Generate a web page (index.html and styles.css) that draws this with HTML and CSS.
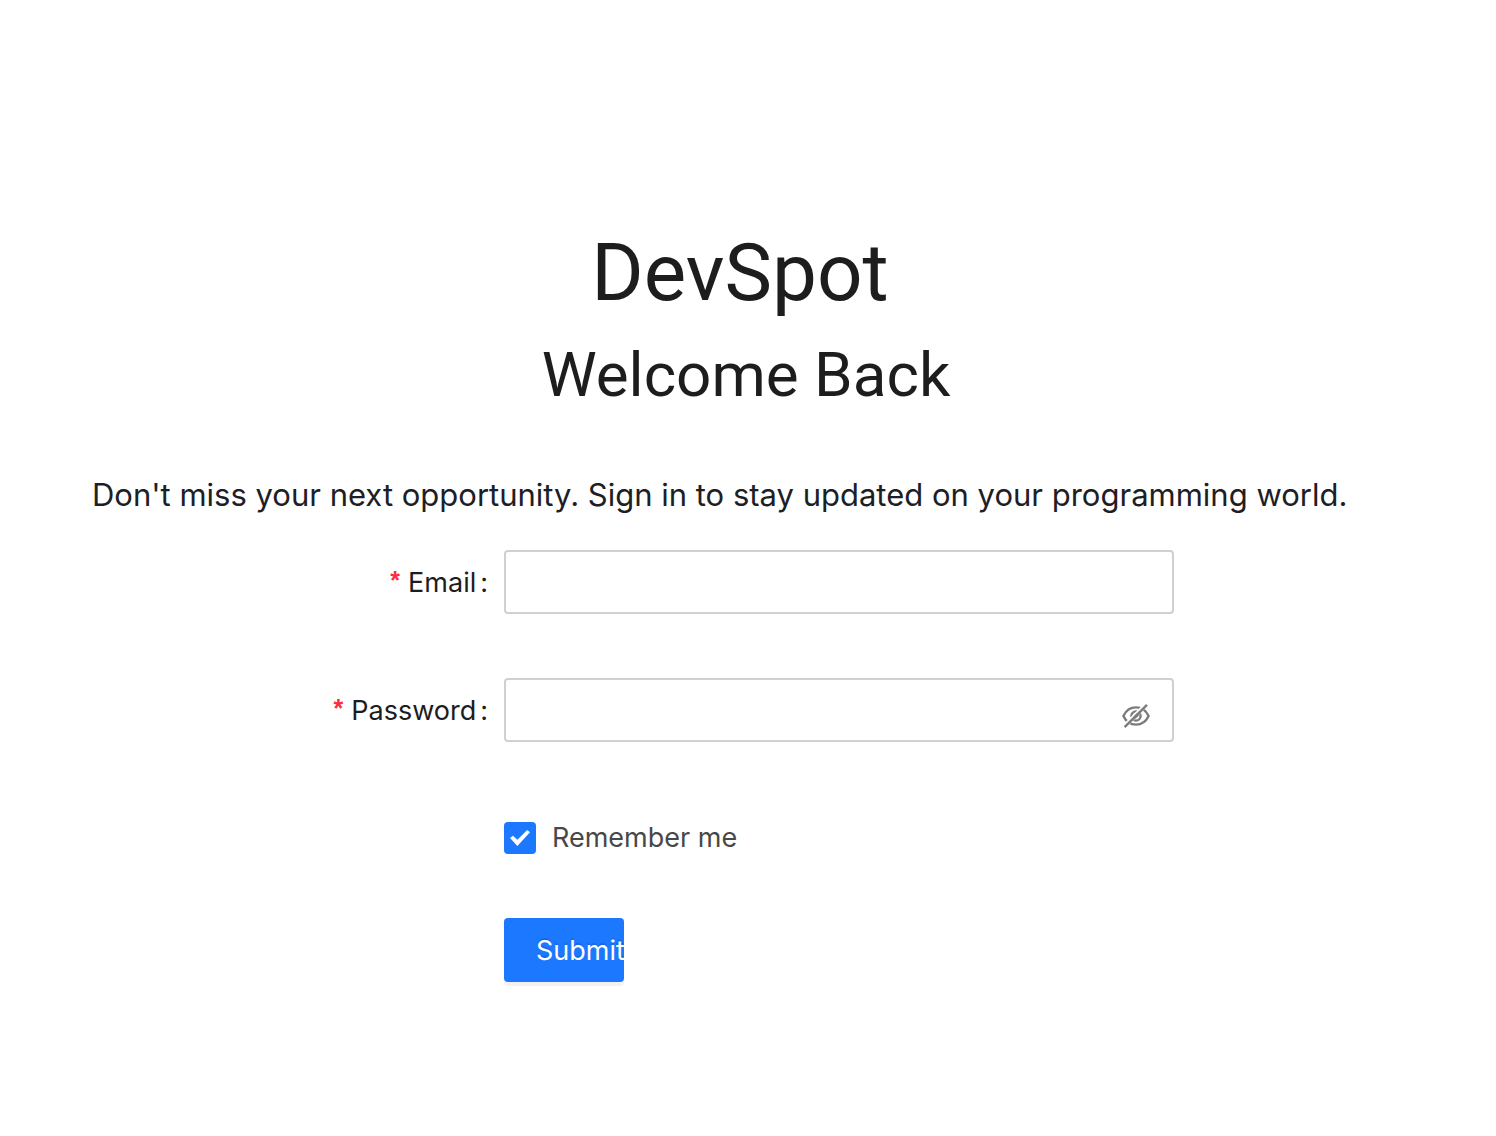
FILE: index.html
```html
<!DOCTYPE html>
<html lang="en">
<head>
<meta charset="utf-8">
<meta name="viewport" content="width=device-width, initial-scale=1">
<title>DevSpot</title>
<link rel="stylesheet" href="styles.css">
</head>
<body>
<main class="page">
  <header class="heading">
    <h1 class="brand">DevSpot</h1>
    <h2 class="welcome">Welcome Back</h2>
  </header>
  <p class="intro">Don't miss your next opportunity. Sign in to stay updated on your programming world.</p>
  <form class="form">
    <div class="row">
      <label class="label" for="email"><span class="required">*</span>Email<span class="colon">:</span></label>
      <input class="field" id="email" type="email" required>
    </div>
    <div class="row">
      <label class="label" for="password"><span class="required">*</span>Password<span class="colon">:</span></label>
      <div class="field password">
        <input class="password-input" id="password" type="password" required>
        <button class="toggle" type="button" aria-label="Show password">
          <svg class="eye" viewBox="0 0 28 28" fill="none" stroke="currentColor" stroke-width="2.400">
            <path d="M1.400 14C4 8.400 8.500 5.400 14 5.400S24 8.400 26.600 14C24 19.600 19.500 22.600 14 22.600S4 19.600 1.400 14Z"/>
            <circle cx="14" cy="14" r="4.600"/>
            <path d="M5 21.800 22 4.800" stroke="#fff" stroke-width="4.400"/>
            <path d="M12.600 15.700 16 12.300" stroke-width="3"/>
            <path d="M2.600 25.200 25 2.800"/>
          </svg>
        </button>
      </div>
    </div>
    <div class="row row-check">
      <label class="remember"><input class="check" type="checkbox" checked>Remember me</label>
    </div>
    <div class="row">
      <button class="submit" type="submit">Submit</button>
    </div>
  </form>
</main>
</body>
</html>
```
FILE: styles.css
```css
* {
  box-sizing: border-box;
}

body {
  margin: 0;
  background: #fff;
  color: #1d1d1d;
  font-family: Inter, "Liberation Sans", sans-serif;
  font-size: 27px;
  line-height: 44px;
}

.page {
  padding: 225px 92px 150px;
}

.heading {
  padding-right: 4px;
  font-family: Roboto, Inter, sans-serif;
  text-align: center;
}

.brand,
.welcome {
  margin: 0;
  font-weight: 400;
}

.brand {
  padding-right: 12px;
  font-size: 80px;
  line-height: 96px;
}

.welcome {
  margin-top: 8px;
  font-size: 62px;
  line-height: 92px;
}

.intro {
  margin: 52px 0 33px;
  color: #1c2024;
  font-size: 31px;
}

.form {
  display: grid;
  gap: 64px;
  margin: 0 230px 0 77px;
}

.row {
  display: grid;
  grid-template-columns: 1fr 2fr;
  align-items: center;
  min-height: 64px;
}

.row > :only-child {
  grid-column: 2;
}

.row-check {
  margin-bottom: -16px;
}

.label {
  padding: 2px 16px 0 0;
  text-align: right;
}

.required {
  margin-right: 8px;
  color: #ff2d3d;
  font-family: "Liberation Sans", sans-serif;
  font-size: 25px;
  font-weight: 700;
  line-height: 1;
  vertical-align: 3px;
}

.colon {
  margin-left: 4px;
}

.field {
  width: 100%;
  height: 64px;
  padding: 8px 22px;
  border: 2px solid #d0d0d0;
  border-radius: 4px;
  background: #fff;
  font: inherit;
}

.password {
  display: flex;
  align-items: center;
}

.password-input {
  flex: 1;
  min-width: 0;
  border: 0;
  outline: 0;
  font: inherit;
}

.toggle {
  padding: 12px 0 0;
  border: 0;
  background: none;
  color: #7c7c7c;
}

.eye {
  display: block;
  width: 28px;
  height: 28px;
}

.remember {
  display: flex;
  align-items: center;
  gap: 16px;
  color: #484848;
}

.check {
  display: grid;
  place-items: center;
  width: 32px;
  height: 32px;
  margin: 0;
  border-radius: 4px;
  background: #1b78ff;
  appearance: none;
}

.check:checked::before {
  width: 20px;
  height: 16px;
  background: #fff;
  clip-path: polygon(0 50%, 15% 36%, 37% 61%, 86% 0, 100% 14%, 37% 100%);
  content: "";
}

.submit {
  width: 120px;
  height: 64px;
  padding: 2px 0 0 32px;
  border: 0;
  border-radius: 4px;
  background: #1b78ff;
  box-shadow: 0 4px 0 #f2f2f2;
  color: #fff;
  font: inherit;
  text-align: left;
  text-shadow: 0 -2px 0 rgba(0, 0, 0, 0.12);
  white-space: nowrap;
}
```
